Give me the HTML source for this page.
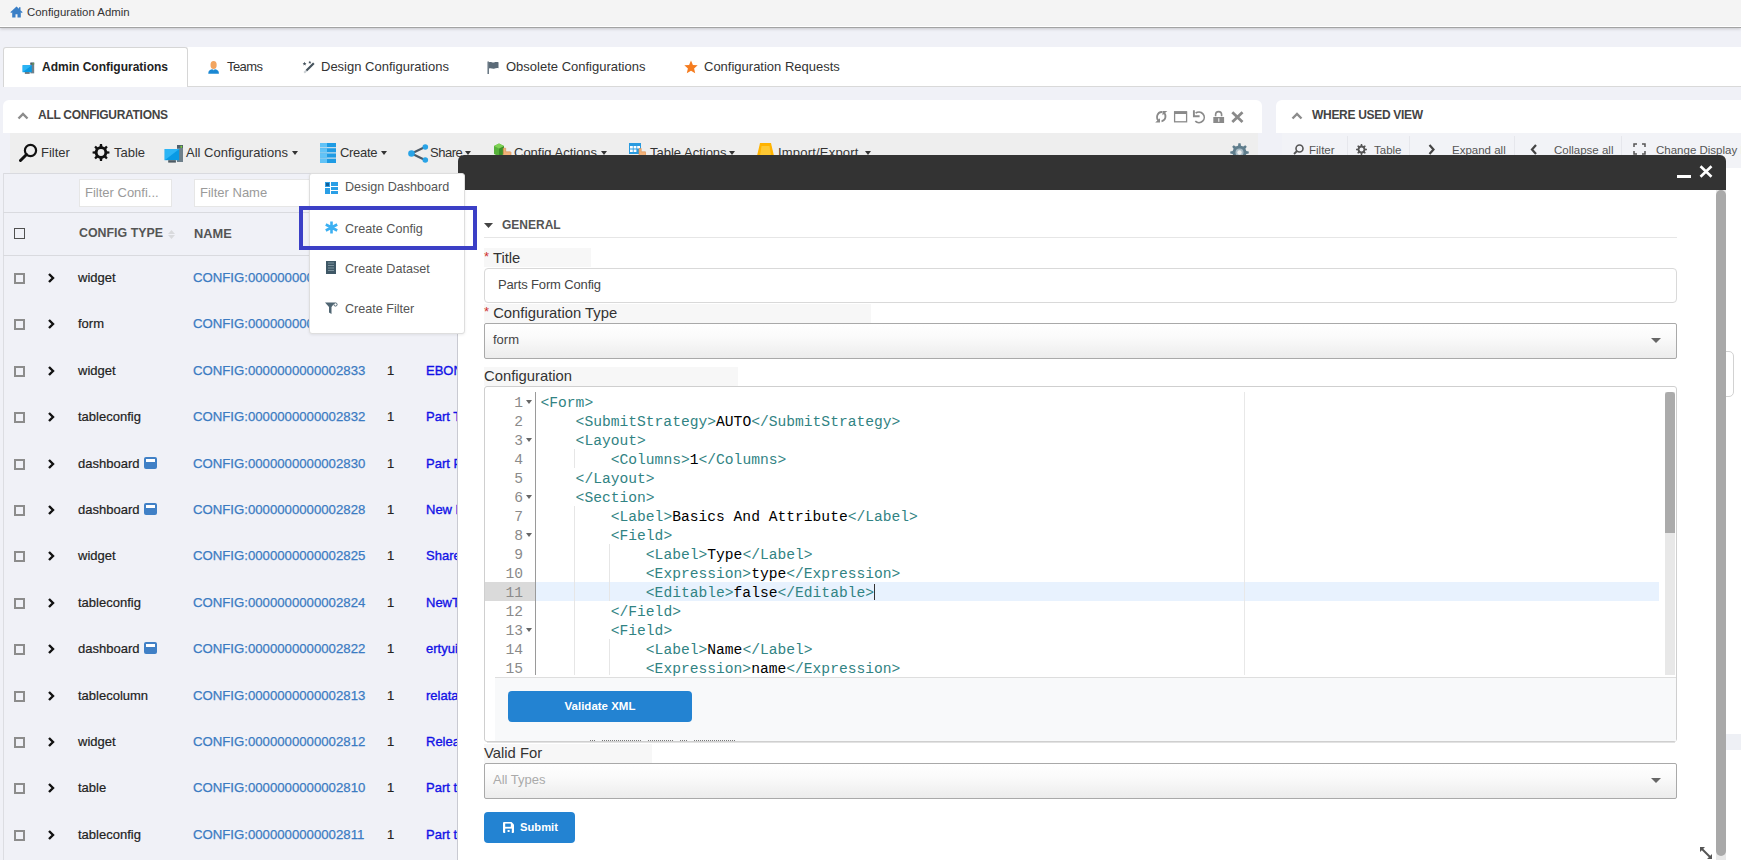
<!DOCTYPE html>
<html><head><meta charset="utf-8">
<style>
*{box-sizing:border-box;margin:0;padding:0}
html,body{width:1741px;height:860px;overflow:hidden;background:#f0f1f7;font-family:"Liberation Sans",sans-serif;color:#333;position:relative}
.a{position:absolute;white-space:nowrap}
svg{display:block}
#hdr{left:0;top:0;width:1741px;height:28px;background:#f4f4f4;border-bottom:1px solid #a3a3a3;box-shadow:inset 0 -1px 0 #fff,0 1px 3px rgba(0,0,0,.18)}
#tabs{left:187px;top:47px;width:1554px;height:40px;background:#fff;border-bottom:1px solid #d9d9d9}
#tab1{left:3px;top:47px;width:185px;height:40px;background:#fff;border:1px solid #d6d6d6;border-bottom:none;border-radius:3px 3px 0 0}
.tabt{font-size:13px;top:59px;color:#333}
#lph{left:3px;top:100px;width:1259px;height:33px;background:#fff;border-radius:6px 6px 0 0}
#tb{left:10px;top:133px;width:1248px;height:40px;background:#eeeeee}
.tbt{font-size:13px;top:145px;color:#333}
.car{width:0;height:0;border-left:3.5px solid transparent;border-right:3.5px solid transparent;border-top:4px solid #333}
#rp{left:1276px;top:100px;width:465px;height:33px;background:#fff;border-radius:6px 0 0 0}
#rtb{left:1282px;top:133px;width:459px;height:35px;background:#f2f3f7}
.rsep{top:136px;width:1px;height:34px;background:#e6e7ec}
.rtt{font-size:11.5px;top:144px;color:#555}
.fin{top:179px;height:28px;background:#fff;border:1px solid #e6e6e6;font-size:13px;color:#9a9a9a;padding:5px 0 0 5px}
.hl{left:3px;width:455px;height:1px;background:#d9dadf}
.cb{left:14px;width:11px;height:11px;border:2px solid #8c8c8c;background:transparent}
.row{font-size:13px;color:#222;-webkit-text-stroke:0.2px #222}
.nm{font-size:13.2px;color:#3b7bc2;-webkit-text-stroke:0.25px #3b7bc2}
.tl{font-size:13px;color:#1212e6;-webkit-text-stroke:0.35px #1212e6}
.dbi{display:inline-block;width:13px;height:12px;background:#4080c6;border-radius:2px;margin-left:5px;vertical-align:-1px;position:relative}
.dbi:after{content:"";position:absolute;left:2px;top:2px;width:9px;height:3px;background:#fff}
#dd{left:309px;top:173px;width:156px;height:161px;background:#fff;border:1px solid #dedede;border-radius:3px;box-shadow:0 1px 3px rgba(0,0,0,.08)}
.ddt{font-size:12.6px;color:#555}
#ddbox{left:299px;top:206px;width:178px;height:44px;border:4.5px solid #3b3fc6}
#mh{left:458px;top:155px;width:1268px;height:35px;background:#333;border-radius:6px 6px 0 0}
#mb{left:458px;top:190px;width:1268px;height:670px;background:#fff}
.lbl{font-family:"Liberation Sans",sans-serif;font-size:14.8px;color:#333}
.ast{color:#d0312d;font-size:13px;position:relative;top:-2px}
.lblbg{background:#f7f7f7;height:19px}
.inp{left:484px;width:1193px;border:1px solid #d9d9d9;border-radius:4px;background:#fff}
.sel{left:484px;width:1193px;border:1px solid #a9a9a9;border-radius:2px;background:linear-gradient(#fff 0%,#fafafa 40%,#ececec 100%)}
.cl{white-space:pre;height:19px}
.code{font-family:"Liberation Mono",monospace;font-size:14.63px;line-height:19px;color:#000}
.tg{color:#318383}
.ln{font-family:"Liberation Mono",monospace;font-size:14.63px;color:#8a8a8a;text-align:right;width:40px}
.fold{width:0;height:0;border-left:3px solid transparent;border-right:3px solid transparent;border-top:4px solid #666}
.btn{background:#2383d2;border-radius:4px;color:#fff;font-weight:bold;font-size:12px;text-align:center}
.ig{background:#e6e6e6;width:1px}
</style></head><body>
<div class="a" id="hdr"></div>
<svg class="a" style="left:10px;top:6px" width="13" height="12" viewBox="0 0 13 12"><path d="M6.5 0.5L0.3 6.2l1 .9L2.2 6.3V11.5h3.3V8.2h2V11.5h3.3V6.3l.9.8 1-.9L10.5 4.2V1.2H9V2.8z" fill="#3a7fc6"/></svg>
<div class="a" style="left:27px;top:6px;font-size:11.4px;color:#333">Configuration Admin</div>

<div class="a" id="tabs"></div>
<div class="a" id="tab1"></div>
<svg class="a" style="left:22px;top:62px" width="13" height="12" viewBox="0 0 20 19"><rect x="13" y="1" width="6" height="17" fill="#6f808b"/><rect x="13" y="1" width="6" height="3" fill="#4f5f6a"/><rect x="16.5" y="1.8" width="1.6" height="2" fill="#7ed23a"/><rect x="0.7" y="5" width="14.5" height="11.2" fill="#089ae5"/><path d="M0.7 5h14.5L0.7 16.2z" fill="#2cb5f5"/><rect x="4.2" y="16.2" width="7.7" height="2.4" fill="#4e5b64"/></svg>
<div class="a tabt" style="left:42px;font-weight:bold;font-size:12px;top:60px;color:#222">Admin Configurations</div>
<svg class="a" style="left:207px;top:60px" width="13" height="14" viewBox="0 0 13 14"><ellipse cx="6.6" cy="5" rx="3.1" ry="3.9" fill="#f2a560"/><path d="M1.3 13.8c0-3 1.2-4.6 5.3-4.6s5.3 1.6 5.3 4.6z" fill="#1b88d3"/><path d="M5.2 9.2h2.8L6.6 10.3z" fill="#fff"/></svg>
<div class="a tabt" style="left:227px;letter-spacing:-0.6px">Teams</div>
<svg class="a" style="left:301px;top:60px" width="14" height="14" viewBox="0 0 14 14"><path d="M3.2 12.8L12.8 3.2" stroke="#c9ced2" stroke-width="2"/><path d="M5.5 10.5L12.8 3.2" stroke="#46535d" stroke-width="2"/><path d="M3.5 1.8l.6 1.3 1.4.1-1.1.9.4 1.4-1.3-.8-1.2.8.4-1.4-1.1-.9 1.4-.1z" fill="#46535d"/><path d="M8.8 0.8l.5 1 1.1.1-.8.7.3 1.1-1.1-.6-1 .6.3-1.1-.8-.7 1.1-.1z" fill="#46535d"/></svg>
<div class="a tabt" style="left:321px">Design Configurations</div>
<svg class="a" style="left:487px;top:61px" width="12" height="13" viewBox="0 0 12 13"><rect x="0.5" y="0.5" width="1.4" height="12.5" fill="#5b6b78"/><path d="M2 1.2c2-.8 3.5.8 5 .3s2.5-.6 4.5-.3v6c-2-.3-3 .2-4.5.5s-3-1-5 -.2z" fill="#5b6b78"/></svg>
<div class="a tabt" style="left:506px">Obsolete Configurations</div>
<svg class="a" style="left:684px;top:60px" width="14" height="14" viewBox="0 0 14 14"><path d="M7 0.5l1.9 4.4 4.8.4-3.6 3.2 1.1 4.7L7 10.7l-4.2 2.5 1.1-4.7L.3 5.3l4.8-.4z" fill="#f57c1f"/></svg>
<div class="a tabt" style="left:704px">Configuration Requests</div>
<div class="a" id="lph"></div>
<svg class="a" style="left:17px;top:112px" width="12" height="8" viewBox="0 0 12 8"><path d="M1.5 6.5L6 2l4.5 4.5" stroke="#8c8c8c" stroke-width="2.4" fill="none"/></svg>
<div class="a" style="left:38px;top:108px;font-size:12px;font-weight:bold;color:#444;letter-spacing:-0.28px">ALL CONFIGURATIONS</div>
<svg class="a" style="left:1153px;top:109px" width="92" height="16" viewBox="0 0 92 16">
<g fill="none" stroke="#8a8a8a" stroke-width="1.8">
<path d="M9.2 3A5 5 0 0 0 6.5 12.3"/><path d="M8.5 12.3A5 5 0 0 0 10.2 3.2"/>
<rect x="21.6" y="3" width="12" height="9.8" stroke-width="1.3"/>
<path d="M40.9 1.2V7.2H46.6" stroke-width="1.9"/><path d="M42.6 4.2A5.3 5.3 0 1 1 42.3 12.2" stroke-width="1.7"/>
<path d="M62.6 7.3V5.6a3 3 0 0 1 6 0v1.7" stroke-width="1.6"/>
<path d="M79.3 3.3l10.2 9.7M89.5 3.3l-10.2 9.7" stroke-width="2.8"/>
</g>
<g fill="#8a8a8a"><path d="M2.2 13.5h4.8v-4.3z"/><path d="M14.3 2h-4.8v4.3z"/><rect x="21" y="2.2" width="12.9" height="2.8"/><rect x="60.3" y="8" width="10.8" height="6"/></g>
<rect x="65.3" y="9.3" width="1" height="3.5" fill="#fff"/>
</svg>

<div class="a" id="tb"></div>
<svg class="a" style="left:19px;top:143px" width="19" height="19" viewBox="0 0 19 19"><circle cx="11.5" cy="7.5" r="5.6" stroke="#111" stroke-width="2.2" fill="none"/><path d="M7.5 11.5L1.5 17.5" stroke="#111" stroke-width="3" stroke-linecap="round"/></svg>
<div class="a tbt" style="left:41px">Filter</div>
<svg class="a" style="left:92px;top:144px" width="18" height="17" viewBox="0 0 18 17"><g transform="translate(9 8.5)"><path d="M6.15 -1.37 L8.43 -1.07 L8.43 1.07 L6.15 1.37 L5.32 3.38 L6.72 5.21 L5.21 6.72 L3.38 5.32 L1.37 6.15 L1.07 8.43 L-1.07 8.43 L-1.37 6.15 L-3.38 5.32 L-5.21 6.72 L-6.72 5.21 L-5.32 3.38 L-6.15 1.37 L-8.43 1.07 L-8.43 -1.07 L-6.15 -1.37 L-5.32 -3.38 L-6.72 -5.21 L-5.21 -6.72 L-3.38 -5.32 L-1.37 -6.15 L-1.07 -8.43 L1.07 -8.43 L1.37 -6.15 L3.38 -5.32 L5.21 -6.72 L6.72 -5.21 L5.32 -3.38Z" fill="#111"/><circle r="3.4" fill="#eee"/></g></svg>
<div class="a tbt" style="left:114px">Table</div>
<svg class="a" style="left:164px;top:144px" width="20" height="19" viewBox="0 0 20 19"><rect x="13" y="1" width="6" height="17" fill="#6f808b"/><rect x="13" y="1" width="6" height="3" fill="#4f5f6a"/><rect x="16.5" y="1.8" width="1.6" height="2" fill="#7ed23a"/><rect x="0.7" y="5" width="14.5" height="11.2" fill="#089ae5"/><path d="M0.7 5h14.5L0.7 16.2z" fill="#2cb5f5"/><rect x="4.2" y="16.2" width="7.7" height="2.4" fill="#4e5b64"/></svg>
<div class="a tbt" style="left:186px">All Configurations</div>
<div class="a car" style="left:292px;top:151px"></div>
<svg class="a" style="left:320px;top:143px" width="16" height="20" viewBox="0 0 16 20"><g fill="#1e9be4"><rect x="0" y="0" width="16" height="4.2"/><rect x="0" y="5.2" width="16" height="4.2"/><rect x="0" y="10.4" width="16" height="4.2"/><rect x="0" y="15.6" width="16" height="4.4"/></g><g fill="#61c3f7"><rect x="0" y="0" width="7" height="4.2"/><rect x="0" y="5.2" width="7" height="4.2"/><rect x="0" y="10.4" width="7" height="4.2"/><rect x="0" y="15.6" width="7" height="4.4"/></g></svg>
<div class="a tbt" style="left:340px;letter-spacing:-0.3px">Create</div>
<div class="a car" style="left:381px;top:151px"></div>
<svg class="a" style="left:408px;top:144px" width="21" height="19" viewBox="0 0 21 19"><path d="M3.5 9.5L17 3M3.5 9.5L17 16" stroke="#4d5a66" stroke-width="2"/><circle cx="3.5" cy="9.5" r="3.3" fill="#29a3e6"/><circle cx="17.3" cy="3" r="2.8" fill="#29a3e6"/><circle cx="17.3" cy="16" r="2.8" fill="#29a3e6"/></svg>
<div class="a tbt" style="left:430px;letter-spacing:-0.5px">Share</div>
<div class="a car" style="left:465px;top:151px"></div>
<svg class="a" style="left:493px;top:143px" width="19" height="14" viewBox="0 0 19 14"><path d="M1 3L6 0.5 11 3V11L6 13.5 1 11z" fill="#57b23b"/><path d="M6 5.5L11 3V11L6 13.5z" fill="#3d8f2a"/><path d="M1 3L6 0.5 11 3 6 5.5z" fill="#7fd255"/><path d="M10.3 5.2h2.4v3.6h4.8l.5.6v4.6h-7.7z" fill="#f3b27a"/><path d="M10.3 5.2h2.4v3.6h4.8l.5.6v4.6h-7.7z" fill="none" stroke="#d98f4e" stroke-width=".6"/></svg>
<div class="a tbt" style="left:514px">Config Actions</div>
<div class="a car" style="left:601px;top:151px"></div>
<svg class="a" style="left:629px;top:143px" width="17" height="13" viewBox="0 0 17 13"><rect x="0" y="0" width="12" height="11" fill="#2a9be0"/><g fill="#fff"><rect x="1" y="3" width="2.8" height="2.5"/><rect x="4.6" y="3" width="2.8" height="2.5"/><rect x="8.2" y="3" width="2.8" height="2.5"/><rect x="1" y="6.5" width="2.8" height="2.5"/><rect x="4.6" y="6.5" width="2.8" height="2.5"/></g><path d="M10 5.5h2.2v3.3h4.3l.5.6v3.6h-7z" fill="#f3b27a"/><path d="M10 5.5h2.2v3.3h4.3l.5.6v3.6h-7z" fill="none" stroke="#d98f4e" stroke-width=".6"/></svg>
<div class="a tbt" style="left:650px">Table Actions</div>
<div class="a car" style="left:729px;top:151px"></div>
<svg class="a" style="left:757px;top:143px" width="17" height="13" viewBox="0 0 17 13"><path d="M3 0h11l3 13H0z" fill="#ffb300"/><path d="M4.5 3h8l1.5 10H3z" fill="#ffc933"/></svg>
<div class="a tbt" style="left:778px;letter-spacing:0.2px">Import/Export</div>
<div class="a car" style="left:865px;top:151px"></div>
<svg class="a" style="left:1230px;top:143px" width="19" height="19" viewBox="0 0 19 19"><g transform="translate(9.5 9.5)"><path d="M6.84 -1.47 L9.24 -1.09 L9.24 1.09 L6.84 1.47 L5.88 3.80 L7.30 5.76 L5.76 7.30 L3.80 5.88 L1.47 6.84 L1.09 9.24 L-1.09 9.24 L-1.47 6.84 L-3.80 5.88 L-5.76 7.30 L-7.30 5.76 L-5.88 3.80 L-6.84 1.47 L-9.24 1.09 L-9.24 -1.09 L-6.84 -1.47 L-5.88 -3.80 L-7.30 -5.76 L-5.76 -7.30 L-3.80 -5.88 L-1.47 -6.84 L-1.09 -9.24 L1.09 -9.24 L1.47 -6.84 L3.80 -5.88 L5.76 -7.30 L7.30 -5.76 L5.88 -3.80Z" fill="#5f7d8c"/><circle r="4" fill="#a9bcc6"/><circle r="2.2" fill="#eee"/></g></svg>

<div class="a" id="rp"></div>
<svg class="a" style="left:1291px;top:112px" width="12" height="8" viewBox="0 0 12 8"><path d="M1.5 6.5L6 2l4.5 4.5" stroke="#8c8c8c" stroke-width="2.4" fill="none"/></svg>
<div class="a" style="left:1312px;top:108px;font-size:12px;font-weight:bold;color:#444;letter-spacing:-0.3px">WHERE USED VIEW</div>
<div class="a" id="rtb"></div>
<div class="a rsep" style="left:1347px"></div><div class="a rsep" style="left:1409px"></div><div class="a rsep" style="left:1514px"></div><div class="a rsep" style="left:1621px"></div>
<svg class="a" style="left:1293px;top:144px" width="11" height="11" viewBox="0 0 11 11"><circle cx="6.5" cy="4.5" r="3.5" stroke="#555" stroke-width="1.6" fill="none"/><path d="M4 7L1 10" stroke="#555" stroke-width="1.8"/></svg>
<div class="a rtt" style="left:1309px">Filter</div>
<svg class="a" style="left:1356px;top:144px" width="11" height="11" viewBox="0 0 11 11"><g transform="translate(5.5 5.5)"><path d="M3.90 -0.87 L5.46 -0.69 L5.46 0.69 L3.90 0.87 L3.38 2.14 L4.35 3.37 L3.37 4.35 L2.14 3.38 L0.87 3.90 L0.69 5.46 L-0.69 5.46 L-0.87 3.90 L-2.14 3.38 L-3.37 4.35 L-4.35 3.37 L-3.38 2.14 L-3.90 0.87 L-5.46 0.69 L-5.46 -0.69 L-3.90 -0.87 L-3.38 -2.14 L-4.35 -3.37 L-3.37 -4.35 L-2.14 -3.38 L-0.87 -3.90 L-0.69 -5.46 L0.69 -5.46 L0.87 -3.90 L2.14 -3.38 L3.37 -4.35 L4.35 -3.37 L3.38 -2.14Z" fill="#555"/><circle r="2" fill="#f2f3f7"/></g></svg>
<div class="a rtt" style="left:1374px">Table</div>
<svg class="a" style="left:1428px;top:144px" width="8" height="11" viewBox="0 0 8 11"><path d="M1.5 1l4 4.5-4 4.5" stroke="#444" stroke-width="2.2" fill="none"/></svg>
<div class="a rtt" style="left:1452px">Expand all</div>
<svg class="a" style="left:1530px;top:144px" width="8" height="11" viewBox="0 0 8 11"><path d="M6 1L2 5.5l4 4.5" stroke="#444" stroke-width="2.2" fill="none"/></svg>
<div class="a rtt" style="left:1554px">Collapse all</div>
<svg class="a" style="left:1633px;top:143px" width="13" height="12" viewBox="0 0 13 12"><path d="M1 4V1h3M9 1h3v3M12 8v3H9M4 11H1V8" stroke="#555" stroke-width="1.5" fill="none"/></svg>
<div class="a rtt" style="left:1656px">Change Display Mode</div>

<div class="a fin" style="left:79px;width:93px">Filter Confi...</div>
<div class="a fin" style="left:194px;width:125px">Filter Name</div>
<div class="a hl" style="top:173px"></div><div class="a" style="left:3px;top:173px;width:1px;height:687px;background:#dcdde2"></div><div class="a hl" style="top:212px"></div>
<div class="a cb" style="top:228px;border-color:#505050;border-width:1.7px"></div>
<div class="a" style="left:79px;top:226px;font-size:12.4px;font-weight:bold;color:#555">CONFIG TYPE</div>
<svg class="a" style="left:168px;top:230px" width="7" height="9" viewBox="0 0 7 9"><path d="M3.5 0L7 4H0zM3.5 9L0 5h7z" fill="#d9dadd"/></svg>
<div class="a" style="left:194px;top:226px;font-size:12.8px;font-weight:bold;color:#555">NAME</div>
<div class="a hl" style="top:255px"></div>
<div class="a" id="tbl" style="left:0;top:0;width:457px;height:860px;overflow:hidden">
<div class="a cb" style="top:273px"></div>
<svg class="a" style="left:47px;top:273px" width="9" height="10" viewBox="0 0 9 10"><path d="M2 1l4 4-4 4" stroke="#111" stroke-width="2.4" fill="none"/></svg>
<div class="a row" style="left:78px;top:270px">widget</div>
<div class="a nm" style="left:193px;top:270px">CONFIG:0000000000002836</div>
<div class="a row" style="left:387px;top:270px">1</div>
<div class="a tl" style="left:426px;top:270px"></div>
<div class="a cb" style="top:319px"></div>
<svg class="a" style="left:47px;top:319px" width="9" height="10" viewBox="0 0 9 10"><path d="M2 1l4 4-4 4" stroke="#111" stroke-width="2.4" fill="none"/></svg>
<div class="a row" style="left:78px;top:316px">form</div>
<div class="a nm" style="left:193px;top:316px">CONFIG:0000000000002835</div>
<div class="a row" style="left:387px;top:316px">1</div>
<div class="a tl" style="left:426px;top:316px"></div>
<div class="a cb" style="top:366px"></div>
<svg class="a" style="left:47px;top:366px" width="9" height="10" viewBox="0 0 9 10"><path d="M2 1l4 4-4 4" stroke="#111" stroke-width="2.4" fill="none"/></svg>
<div class="a row" style="left:78px;top:363px">widget</div>
<div class="a nm" style="left:193px;top:363px">CONFIG:0000000000002833</div>
<div class="a row" style="left:387px;top:363px">1</div>
<div class="a tl" style="left:426px;top:363px">EBONY</div>
<div class="a cb" style="top:412px"></div>
<svg class="a" style="left:47px;top:412px" width="9" height="10" viewBox="0 0 9 10"><path d="M2 1l4 4-4 4" stroke="#111" stroke-width="2.4" fill="none"/></svg>
<div class="a row" style="left:78px;top:409px">tableconfig</div>
<div class="a nm" style="left:193px;top:409px">CONFIG:0000000000002832</div>
<div class="a row" style="left:387px;top:409px">1</div>
<div class="a tl" style="left:426px;top:409px">Part Table</div>
<div class="a cb" style="top:459px"></div>
<svg class="a" style="left:47px;top:459px" width="9" height="10" viewBox="0 0 9 10"><path d="M2 1l4 4-4 4" stroke="#111" stroke-width="2.4" fill="none"/></svg>
<div class="a row" style="left:78px;top:456px">dashboard<span class="dbi"></span></div>
<div class="a nm" style="left:193px;top:456px">CONFIG:0000000000002830</div>
<div class="a row" style="left:387px;top:456px">1</div>
<div class="a tl" style="left:426px;top:456px">Part Page</div>
<div class="a cb" style="top:505px"></div>
<svg class="a" style="left:47px;top:505px" width="9" height="10" viewBox="0 0 9 10"><path d="M2 1l4 4-4 4" stroke="#111" stroke-width="2.4" fill="none"/></svg>
<div class="a row" style="left:78px;top:502px">dashboard<span class="dbi"></span></div>
<div class="a nm" style="left:193px;top:502px">CONFIG:0000000000002828</div>
<div class="a row" style="left:387px;top:502px">1</div>
<div class="a tl" style="left:426px;top:502px">New Dash</div>
<div class="a cb" style="top:551px"></div>
<svg class="a" style="left:47px;top:551px" width="9" height="10" viewBox="0 0 9 10"><path d="M2 1l4 4-4 4" stroke="#111" stroke-width="2.4" fill="none"/></svg>
<div class="a row" style="left:78px;top:548px">widget</div>
<div class="a nm" style="left:193px;top:548px">CONFIG:0000000000002825</div>
<div class="a row" style="left:387px;top:548px">1</div>
<div class="a tl" style="left:426px;top:548px">Shared</div>
<div class="a cb" style="top:598px"></div>
<svg class="a" style="left:47px;top:598px" width="9" height="10" viewBox="0 0 9 10"><path d="M2 1l4 4-4 4" stroke="#111" stroke-width="2.4" fill="none"/></svg>
<div class="a row" style="left:78px;top:595px">tableconfig</div>
<div class="a nm" style="left:193px;top:595px">CONFIG:0000000000002824</div>
<div class="a row" style="left:387px;top:595px">1</div>
<div class="a tl" style="left:426px;top:595px">NewTable</div>
<div class="a cb" style="top:644px"></div>
<svg class="a" style="left:47px;top:644px" width="9" height="10" viewBox="0 0 9 10"><path d="M2 1l4 4-4 4" stroke="#111" stroke-width="2.4" fill="none"/></svg>
<div class="a row" style="left:78px;top:641px">dashboard<span class="dbi"></span></div>
<div class="a nm" style="left:193px;top:641px">CONFIG:0000000000002822</div>
<div class="a row" style="left:387px;top:641px">1</div>
<div class="a tl" style="left:426px;top:641px">ertyuio</div>
<div class="a cb" style="top:691px"></div>
<svg class="a" style="left:47px;top:691px" width="9" height="10" viewBox="0 0 9 10"><path d="M2 1l4 4-4 4" stroke="#111" stroke-width="2.4" fill="none"/></svg>
<div class="a row" style="left:78px;top:688px">tablecolumn</div>
<div class="a nm" style="left:193px;top:688px">CONFIG:0000000000002813</div>
<div class="a row" style="left:387px;top:688px">1</div>
<div class="a tl" style="left:426px;top:688px">relatable</div>
<div class="a cb" style="top:737px"></div>
<svg class="a" style="left:47px;top:737px" width="9" height="10" viewBox="0 0 9 10"><path d="M2 1l4 4-4 4" stroke="#111" stroke-width="2.4" fill="none"/></svg>
<div class="a row" style="left:78px;top:734px">widget</div>
<div class="a nm" style="left:193px;top:734px">CONFIG:0000000000002812</div>
<div class="a row" style="left:387px;top:734px">1</div>
<div class="a tl" style="left:426px;top:734px">Release</div>
<div class="a cb" style="top:783px"></div>
<svg class="a" style="left:47px;top:783px" width="9" height="10" viewBox="0 0 9 10"><path d="M2 1l4 4-4 4" stroke="#111" stroke-width="2.4" fill="none"/></svg>
<div class="a row" style="left:78px;top:780px">table</div>
<div class="a nm" style="left:193px;top:780px">CONFIG:0000000000002810</div>
<div class="a row" style="left:387px;top:780px">1</div>
<div class="a tl" style="left:426px;top:780px">Part table</div>
<div class="a cb" style="top:830px"></div>
<svg class="a" style="left:47px;top:830px" width="9" height="10" viewBox="0 0 9 10"><path d="M2 1l4 4-4 4" stroke="#111" stroke-width="2.4" fill="none"/></svg>
<div class="a row" style="left:78px;top:827px">tableconfig</div>
<div class="a nm" style="left:193px;top:827px">CONFIG:0000000000002811</div>
<div class="a row" style="left:387px;top:827px">1</div>
<div class="a tl" style="left:426px;top:827px">Part table</div>
</div>
<div class="a" style="left:457px;top:173px;width:1px;height:687px;background:#c9cad2"></div>
<div class="a" id="mh"></div>
<div class="a" style="left:1677px;top:175px;width:14px;height:3px;background:#fff"></div>
<svg class="a" style="left:1699px;top:165px" width="14" height="13" viewBox="0 0 14 13"><path d="M1.5 1.2l11 10.6M12.5 1.2l-11 10.6" stroke="#fff" stroke-width="2.6"/></svg>
<div class="a" id="mb"></div>
<div class="a" style="left:1716px;top:190px;width:10px;height:670px;background:#e8e8e8"></div>
<div class="a" style="left:1716px;top:190px;width:10px;height:666px;background:#a9a9a9;border-radius:5px"></div>
<svg class="a" style="left:1699px;top:846px" width="14" height="14" viewBox="0 0 14 14"><path d="M2.5 2.5l9 9" stroke="#555" stroke-width="2"/><path d="M1 1h5L1 6zM13 13H8l5-5z" fill="#555"/></svg>
<div class="a" style="left:1726px;top:168px;width:15px;height:692px;background:#fff"></div>
<div class="a" style="left:1716px;top:351px;width:18px;height:46px;border:1px solid #d2d2d2;border-radius:5px;background:#fff"></div>
<div class="a" style="left:1726px;top:734px;width:15px;height:16px;background:#eef0f5"></div>
<div class="a" style="left:1716px;top:190px;width:10px;height:670px;background:#e8e8e8"></div>
<div class="a" style="left:1716px;top:190px;width:10px;height:666px;background:#a9a9a9;border-radius:5px"></div>

<svg class="a" style="left:484px;top:223px" width="9" height="6" viewBox="0 0 9 6"><path d="M0 0h9L4.5 5z" fill="#444"/></svg>
<div class="a" style="left:502px;top:218px;font-size:12px;font-weight:bold;color:#555">GENERAL</div>
<div class="a" style="left:484px;top:237px;width:1193px;height:1px;background:#e6e6e6"></div>

<div class="a lblbg" style="left:484px;top:248px;width:107px"></div>
<div class="a lbl" style="left:484px;top:249.5px"><span class="ast">*</span> Title</div>
<div class="a inp" style="top:268px;height:35px"></div>
<div class="a" style="left:498px;top:277px;font-size:13px;color:#444;letter-spacing:-0.15px">Parts Form Config</div>

<div class="a lblbg" style="left:484px;top:304px;width:387px"></div>
<div class="a lbl" style="left:484px;top:305px"><span class="ast">*</span> Configuration Type</div>
<div class="a sel" style="top:323px;height:36px"></div>
<div class="a" style="left:493px;top:332px;font-size:13px;color:#444">form</div>
<svg class="a" style="left:1651px;top:338px" width="10" height="6" viewBox="0 0 10 6"><path d="M0 0h10L5 5z" fill="#666"/></svg>

<div class="a lblbg" style="left:484px;top:367px;width:254px"></div>
<div class="a lbl" style="left:484px;top:367.5px">Configuration</div>

<div class="a" style="left:484px;top:386px;width:1193px;height:356px;border:1px solid #cfcfcf;border-radius:3px;background:#fff"></div>
<div class="a" style="left:485px;top:582px;width:51px;height:19px;background:#dadada"></div>
<div class="a" style="left:536px;top:582px;width:1123px;height:19px;background:#e8f2fe"></div>
<div class="a" style="left:535px;top:392px;width:1px;height:283px;background:#9a9a9a"></div>
<div class="a" style="left:1244px;top:392px;width:1px;height:283px;background:#e8e8e8"></div>
<div class="a" style="left:1665px;top:392px;width:10px;height:283px;background:#e8e8e8"></div>
<div class="a" style="left:1665px;top:392px;width:10px;height:141px;background:#ababab;border-radius:3px 3px 0 0"></div>
<div class="a ig" style="left:574px;top:449px;height:19px"></div>
<div class="a ig" style="left:574px;top:506px;height:169px"></div>
<div class="a ig" style="left:609px;top:544px;height:57px"></div>
<div class="a ig" style="left:609px;top:639px;height:36px"></div>
<div class="a ln" style="left:483px;top:394px;line-height:19px">1<br>2<br>3<br>4<br>5<br>6<br>7<br>8<br>9<br>10<br>11<br>12<br>13<br>14<br>15</div>
<div class="a fold" style="left:526px;top:400px"></div>
<div class="a fold" style="left:526px;top:438px"></div>
<div class="a fold" style="left:526px;top:495px"></div>
<div class="a fold" style="left:526px;top:533px"></div>
<div class="a fold" style="left:526px;top:628px"></div>
<div class="a code" style="left:540.5px;top:394px">
<div class="cl"><span class="tg">&lt;Form&gt;</span></div>
<div class="cl">    <span class="tg">&lt;SubmitStrategy&gt;</span>AUTO<span class="tg">&lt;/SubmitStrategy&gt;</span></div>
<div class="cl">    <span class="tg">&lt;Layout&gt;</span></div>
<div class="cl">        <span class="tg">&lt;Columns&gt;</span>1<span class="tg">&lt;/Columns&gt;</span></div>
<div class="cl">    <span class="tg">&lt;/Layout&gt;</span></div>
<div class="cl">    <span class="tg">&lt;Section&gt;</span></div>
<div class="cl">        <span class="tg">&lt;Label&gt;</span>Basics And Attribute<span class="tg">&lt;/Label&gt;</span></div>
<div class="cl">        <span class="tg">&lt;Field&gt;</span></div>
<div class="cl">            <span class="tg">&lt;Label&gt;</span>Type<span class="tg">&lt;/Label&gt;</span></div>
<div class="cl">            <span class="tg">&lt;Expression&gt;</span>type<span class="tg">&lt;/Expression&gt;</span></div>
<div class="cl">            <span class="tg">&lt;Editable&gt;</span>false<span class="tg">&lt;/Editable&gt;</span></div>
<div class="cl">        <span class="tg">&lt;/Field&gt;</span></div>
<div class="cl">        <span class="tg">&lt;Field&gt;</span></div>
<div class="cl">            <span class="tg">&lt;Label&gt;</span>Name<span class="tg">&lt;/Label&gt;</span></div>
<div class="cl">            <span class="tg">&lt;Expression&gt;</span>name<span class="tg">&lt;/Expression&gt;</span></div>
</div>
<div class="a" style="left:874px;top:584px;width:1px;height:16px;background:#333"></div>
<div class="a" style="left:495px;top:677px;width:1181px;height:64px;background:#f8f9fa;border-top:1px solid #dedede"></div><div class="a" style="left:487px;top:742px;width:1188px;height:1px;background:#e2e2e2"></div>
<div class="a btn" style="left:508px;top:691px;width:184px;height:31px;padding-top:9px;font-size:11.5px">Validate XML</div>
<div class="a" style="left:590px;top:740px;width:5px;height:2px;border-top:1.5px dotted #777"></div><div class="a" style="left:602px;top:740px;width:39px;height:2px;border-top:1.5px dotted #777"></div><div class="a" style="left:648px;top:740px;width:25px;height:2px;border-top:1.5px dotted #777"></div><div class="a" style="left:680px;top:740px;width:7px;height:2px;border-top:1.5px dotted #777"></div><div class="a" style="left:694px;top:740px;width:41px;height:2px;border-top:1.5px dotted #777"></div>

<div class="a lblbg" style="left:484px;top:744px;width:168px"></div>
<div class="a lbl" style="left:484px;top:745px">Valid For</div>
<div class="a sel" style="top:763px;height:36px"></div>
<div class="a" style="left:493px;top:772px;font-size:13px;color:#aaa">All Types</div>
<svg class="a" style="left:1651px;top:778px" width="10" height="6" viewBox="0 0 10 6"><path d="M0 0h10L5 5z" fill="#666"/></svg>

<div class="a btn" style="left:484px;top:812px;width:91px;height:31px"></div>
<svg class="a" style="left:503px;top:822px" width="11" height="11" viewBox="0 0 11 11"><path d="M1 0h7.5l2.5 2.5V10a1 1 0 0 1-1 1H1a1 1 0 0 1-1-1V1a1 1 0 0 1 1-1z" fill="#fff"/><rect x="2.2" y="1.6" width="5.6" height="3.2" fill="#2383d2"/><rect x="2.2" y="6.6" width="6.6" height="4.4" fill="#2383d2"/><rect x="4.6" y="8" width="2" height="2" fill="#fff"/></svg>
<div class="a" style="left:520px;top:821px;font-size:11.2px;font-weight:bold;color:#fff">Submit</div>

<div class="a" id="dd"></div>
<svg class="a" style="left:325px;top:182px" width="13" height="12" viewBox="0 0 13 12"><g fill="#2a9fe6"><rect x="0" y="0" width="5" height="5"/><rect x="6" y="0" width="7" height="4"/><rect x="0" y="6" width="5" height="6"/><rect x="6" y="5" width="7" height="3"/><rect x="6" y="9" width="7" height="3"/></g><rect x="1" y="1" width="3" height="3" fill="#155e96"/></svg>
<div class="a ddt" style="left:345px;top:180px">Design Dashboard</div>
<svg class="a" style="left:325px;top:221px" width="13" height="13" viewBox="0 0 13 13"><g stroke="#3cb0f2" stroke-width="2.6"><path d="M6.5 0.5v12M0.8 3.5l11.4 6M0.8 9.5l11.4-6"/></g></svg>
<div class="a ddt" style="left:345px;top:222px">Create Config</div>
<svg class="a" style="left:326px;top:261px" width="11" height="13" viewBox="0 0 11 13"><rect x="0" y="0" width="10" height="13" fill="#3f5866"/><g fill="#7b919c"><rect x="2" y="1.5" width="6" height="1"/><rect x="2" y="4" width="6" height="1"/><rect x="2" y="6.5" width="6" height="1"/><rect x="2" y="9" width="6" height="1"/></g></svg>
<div class="a ddt" style="left:345px;top:262px">Create Dataset</div>
<svg class="a" style="left:325px;top:302px" width="13" height="12" viewBox="0 0 13 12"><path d="M0 0.5h10L6.5 5v7L4 10.5V5z" fill="#4f6572"/><circle cx="10.5" cy="2.5" r="1.6" stroke="#4f6572" stroke-width="1" fill="none"/></svg>
<div class="a ddt" style="left:345px;top:302px">Create Filter</div>
<div class="a" id="ddbox"></div>
</body></html>
